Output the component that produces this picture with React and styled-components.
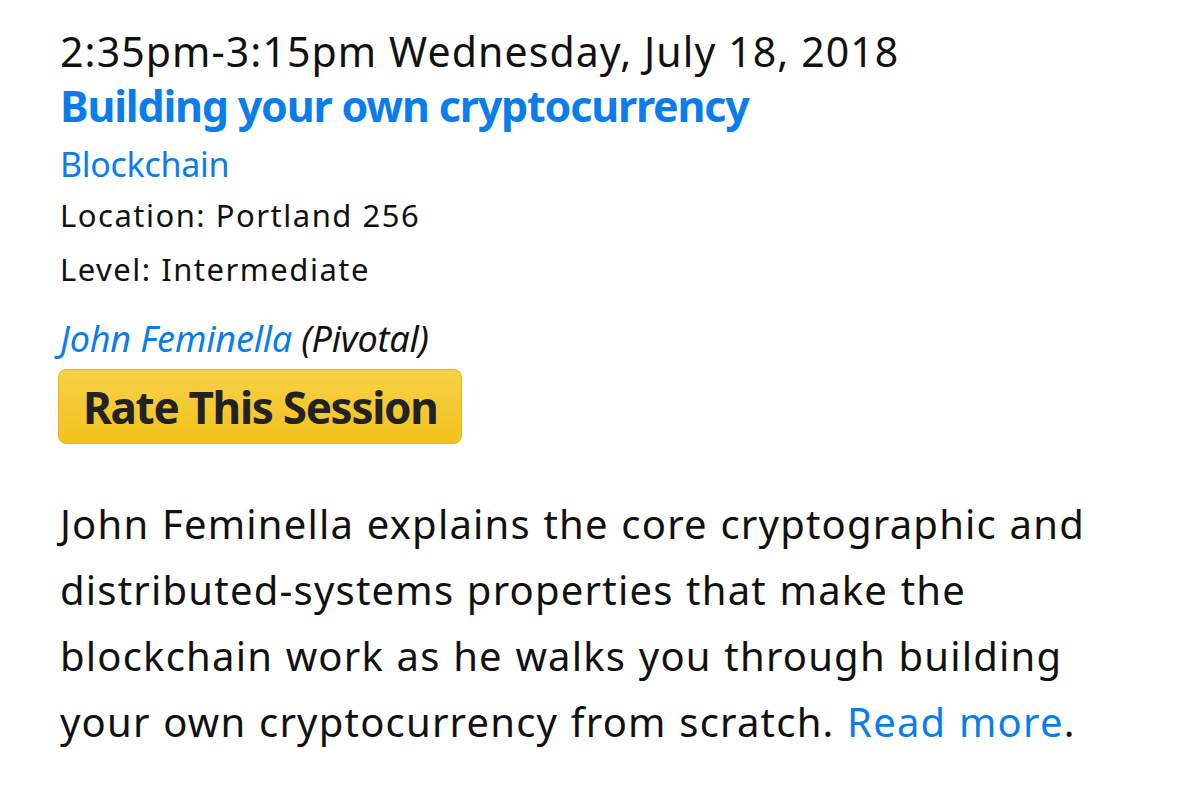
import styled, { createGlobalStyle } from 'styled-components'

const GlobalStyle = createGlobalStyle`
    body {
        margin: 0;
        background: #ffffff;
        font-family: "Noto Sans", "Open Sans", sans-serif;
        color: #111111;
    }
`

const Sessao = styled.article`
    padding: 24px 0 0 60px;
    display: flex;
    flex-direction: column;
    align-items: flex-start;
`
const Horario = styled.div`
    font-size: 41px;
    line-height: 55px;
    letter-spacing: 1.1px;
`
const Titulo = styled.a`
    font-size: 43px;
    line-height: 54px;
    font-weight: 700;
    letter-spacing: -1.2px;
    color: #0a7ded;
    text-decoration: none;
`
const Trilha = styled.a`
    margin-top: 5px;
    font-size: 34px;
    line-height: 52px;
    letter-spacing: -0.3px;
    color: #0a7ded;
    text-decoration: none;
`
const Info = styled.div`
    margin-top: ${p => p.$espaco || 0}px;
    font-size: 31px;
    line-height: 50px;
    letter-spacing: 1.5px;
`
const Palestrante = styled.div`
    margin-top: 18px;
    font-size: 36px;
    line-height: 54px;
    font-style: italic;
    letter-spacing: -0.2px;
`
const Link = styled.a`
    color: #0a7ded;
    text-decoration: none;
`
const BotaoAvaliar = styled.button`
    margin: 3px 0 0 -2px;
    height: 75px;
    padding: 0 23px 0 24px;
    display: inline-flex;
    align-items: center;
    border: 1px solid #e9b718;
    border-radius: 8px;
    background: linear-gradient(#f7d247, #f2c11b);
    font-family: "Noto Sans", "Open Sans", sans-serif;
    font-size: 44px;
    font-weight: 700;
    letter-spacing: -1.3px;
    color: #222222;
    cursor: pointer;
`
const Descricao = styled.p`
    margin: 47px 0 0;
    font-size: 40px;
    line-height: 66px;
    letter-spacing: 1.2px;
    word-spacing: 1px;
    max-width: 1130px;
`

export default function App() {
    return (
        <>
            <GlobalStyle />
            <Sessao>
                <Horario>2:35pm-3:15pm Wednesday, July 18, 2018</Horario>
                <Titulo href="#">Building your own cryptocurrency</Titulo>
                <Trilha href="#">Blockchain</Trilha>
                <Info>Location: Portland 256</Info>
                <Info $espaco={4}>Level: Intermediate</Info>
                <Palestrante>
                    <Link href="#">John Feminella</Link> (Pivotal)
                </Palestrante>
                <BotaoAvaliar>Rate This Session</BotaoAvaliar>
                <Descricao>
                    John Feminella explains the core cryptographic and<br />
                    distributed-systems properties that make the<br />
                    blockchain work as he walks you through building<br />
                    your own cryptocurrency from scratch. <Link href="#">Read more</Link>.
                </Descricao>
            </Sessao>
        </>
    )
}
